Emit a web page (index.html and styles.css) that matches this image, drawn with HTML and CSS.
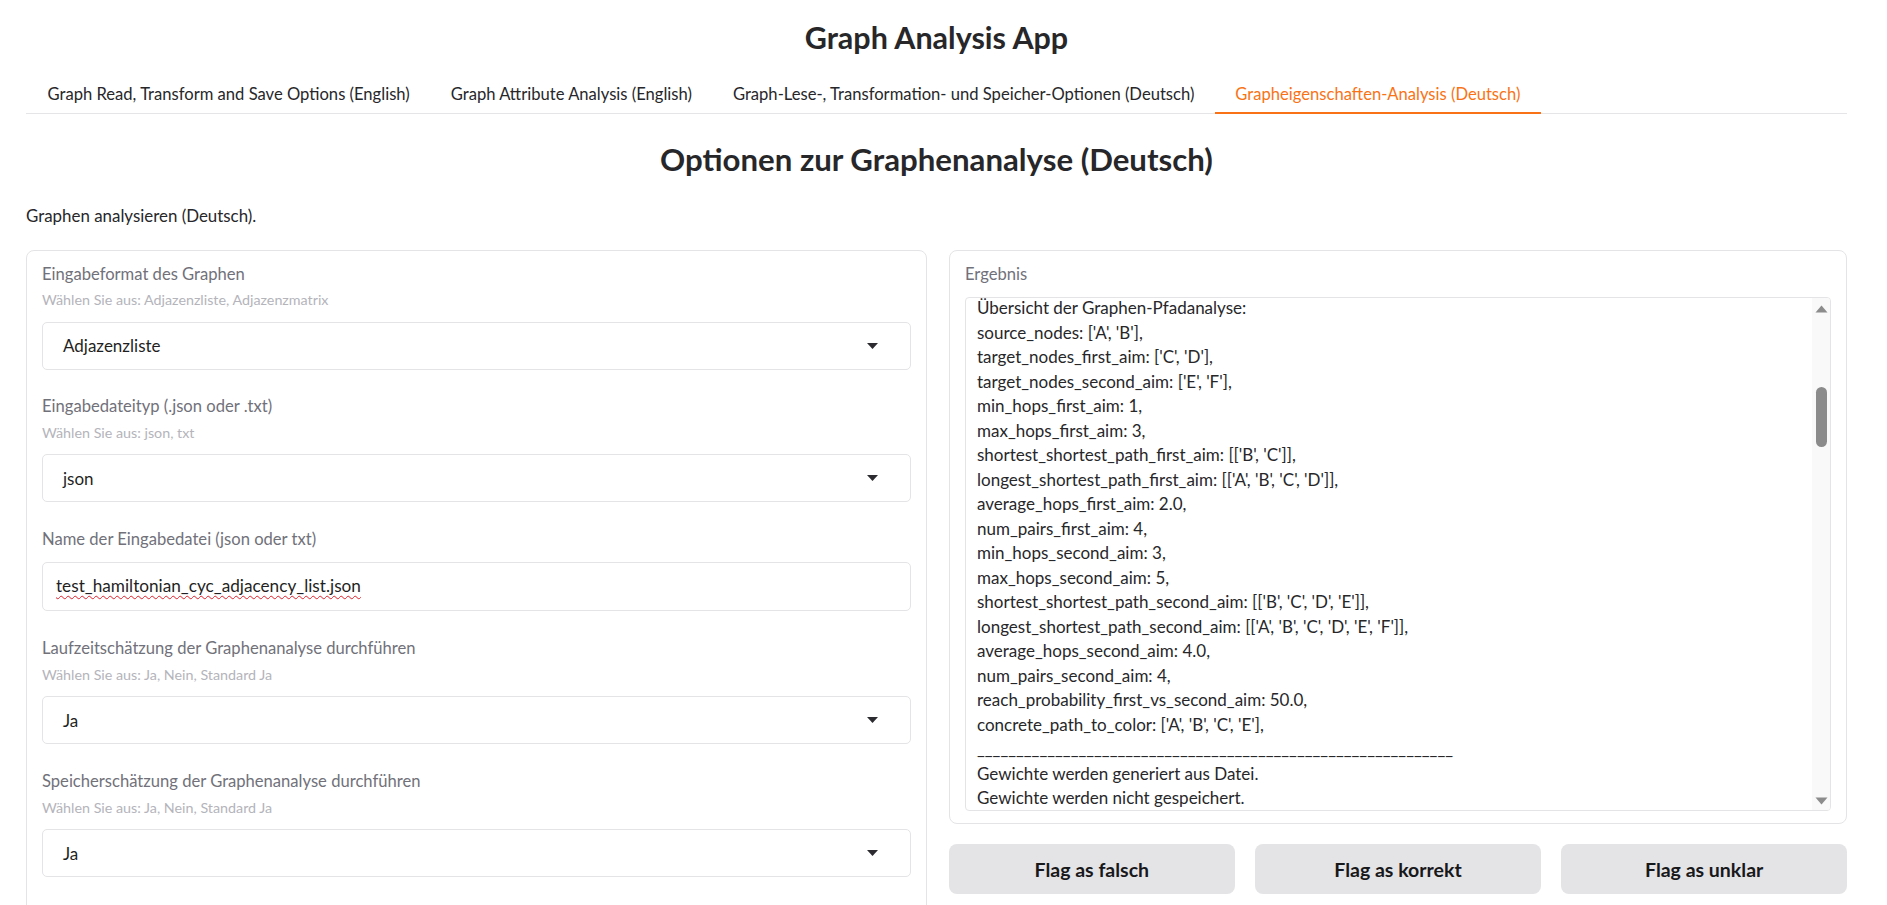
FILE: index.html
```html
<!DOCTYPE html>
<html lang="de">
<head>
<meta charset="utf-8">
<title>Graph Analysis App</title>
<link rel="stylesheet" href="styles.css">
</head>
<body>
<div class="app">
  <h1 class="app-title">Graph Analysis App</h1>
  <nav class="tabs">
    <button class="tab">Graph Read, Transform and Save Options (English)</button>
    <button class="tab">Graph Attribute Analysis (English)</button>
    <button class="tab">Graph-Lese-, Transformation- und Speicher-Optionen (Deutsch)</button>
    <button class="tab tab-active">Grapheigenschaften-Analysis (Deutsch)</button>
  </nav>
  <h2 class="page-title">Optionen zur Graphenanalyse (Deutsch)</h2>
  <p class="description">Graphen analysieren (Deutsch).</p>

  <div class="columns">
    <section class="panel panel-form">
      <div class="field">
        <div class="label">Eingabeformat des Graphen</div>
        <div class="info">Wählen Sie aus: Adjazenzliste, Adjazenzmatrix</div>
        <div class="dropdown">
          <span class="dropdown-value">Adjazenzliste</span>
          <svg class="caret" width="11" height="6" viewBox="0 0 11 6"><polygon points="0,0 11,0 5.5,6" /></svg>
        </div>
      </div>
      <div class="field">
        <div class="label">Eingabedateityp (.json oder .txt)</div>
        <div class="info">Wählen Sie aus: json, txt</div>
        <div class="dropdown">
          <span class="dropdown-value">json</span>
          <svg class="caret" width="11" height="6" viewBox="0 0 11 6"><polygon points="0,0 11,0 5.5,6" /></svg>
        </div>
      </div>
      <div class="field">
        <div class="label">Name der Eingabedatei (json oder txt)</div>
        <div class="textbox"><span class="misspelled">test_hamiltonian_cyc_adjacency_list.json</span></div>
      </div>
      <div class="field">
        <div class="label">Laufzeitschätzung der Graphenanalyse durchführen</div>
        <div class="info">Wählen Sie aus: Ja, Nein, Standard Ja</div>
        <div class="dropdown">
          <span class="dropdown-value">Ja</span>
          <svg class="caret" width="11" height="6" viewBox="0 0 11 6"><polygon points="0,0 11,0 5.5,6" /></svg>
        </div>
      </div>
      <div class="field">
        <div class="label">Speicherschätzung der Graphenanalyse durchführen</div>
        <div class="info">Wählen Sie aus: Ja, Nein, Standard Ja</div>
        <div class="dropdown">
          <span class="dropdown-value">Ja</span>
          <svg class="caret" width="11" height="6" viewBox="0 0 11 6"><polygon points="0,0 11,0 5.5,6" /></svg>
        </div>
      </div>
    </section>

    <div class="right-col">
      <section class="panel panel-result">
        <div class="label">Ergebnis</div>
        <div class="result-box">
          <div class="result-text"><pre class="result-pre">Übersicht der Graphen-Pfadanalyse:
source_nodes: ['A', 'B'],
target_nodes_first_aim: ['C', 'D'],
target_nodes_second_aim: ['E', 'F'],
min_hops_first_aim: 1,
max_hops_first_aim: 3,
shortest_shortest_path_first_aim: [['B', 'C']],
longest_shortest_path_first_aim: [['A', 'B', 'C', 'D']],
average_hops_first_aim: 2.0,
num_pairs_first_aim: 4,
min_hops_second_aim: 3,
max_hops_second_aim: 5,
shortest_shortest_path_second_aim: [['B', 'C', 'D', 'E']],
longest_shortest_path_second_aim: [['A', 'B', 'C', 'D', 'E', 'F']],
average_hops_second_aim: 4.0,
num_pairs_second_aim: 4,
reach_probability_first_vs_second_aim: 50.0,
concrete_path_to_color: ['A', 'B', 'C', 'E'],
_____________________________________________________________
Gewichte werden generiert aus Datei.
Gewichte werden nicht gespeichert.</pre></div>
          <div class="vscroll">
            <svg class="sb-arrow" width="13" height="8" viewBox="0 0 13 8"><polygon points="6.5,0.5 12.5,7.5 0.5,7.5" /></svg>
            <div class="sb-thumb"></div>
            <svg class="sb-arrow sb-arrow-down" width="13" height="8" viewBox="0 0 13 8"><polygon points="0.5,0.5 12.5,0.5 6.5,7.5" /></svg>
          </div>
        </div>
      </section>
      <div class="actions">
        <button class="flag-btn">Flag as falsch</button>
        <button class="flag-btn">Flag as korrekt</button>
        <button class="flag-btn">Flag as unklar</button>
      </div>
    </div>
  </div>
</div>
</body>
</html>
```

FILE: styles.css
```css
html, body {
  margin: 0;
  padding: 0;
  overflow: hidden;
  background: #ffffff;
}

body {
  font-family: "Lato", "Open Sans", sans-serif;
  color: #27272a;
}

.app {
  padding: 0 40px 0 26px;
}

.app-title {
  margin: 20px 0 0;
  font-size: 30.5px;
  line-height: 35px;
  font-weight: 700;
  text-align: center;
  color: #27272a;
}

.tabs {
  display: flex;
  margin-top: 20px;
  border-bottom: 1px solid #e5e5e8;
}

.tab {
  font-family: inherit;
  font-size: 16.6px;
  line-height: 22px;
  color: #27272a;
  background: none;
  border: none;
  border-bottom: 2px solid transparent;
  margin: 0 0 -1px;
  padding: 8px 20.5px 7.3px;
  cursor: pointer;
  white-space: nowrap;
}

.tab:first-child {
  margin-left: 1px;
}

.tab-active {
  color: #f97316;
  border-bottom-color: #f97316;
}

.page-title {
  margin: 26.9px 0 0;
  font-size: 31.2px;
  line-height: 37px;
  font-weight: 700;
  text-align: center;
  color: #27272a;
}

.description {
  margin: 26.8px 0 0;
  font-size: 16.9px;
  line-height: 22px;
}

.columns {
  display: grid;
  grid-template-columns: 901px 1fr;
  gap: 22px;
  margin-top: 22.8px;
  align-items: start;
}

.panel {
  border: 1px solid #e4e4e7;
  border-radius: 8px;
  background: #ffffff;
}

.panel-form {
  padding: 11.8px 15px 60px 15px;
}

.field + .field {
  margin-top: 25.9px;
}

.label {
  font-size: 16.6px;
  line-height: 22px;
  color: #71717a;
}

.info {
  margin-top: 5.8px;
  font-size: 14.3px;
  line-height: 20px;
  color: #b4b4bb;
}

.dropdown {
  display: flex;
  align-items: center;
  height: 48px;
  box-sizing: border-box;
  margin-top: 11.2px;
  padding: 0 32px 0 20px;
  border: 1px solid #e4e4e7;
  border-radius: 5px;
  font-size: 17px;
  color: #1f1f23;
}

.dropdown-value {
  flex: 1;
}

.caret {
  display: block;
  fill: #2b2b30;
}

.textbox {
  display: flex;
  align-items: center;
  height: 49px;
  box-sizing: border-box;
  margin-top: 12px;
  padding: 0 13px 3px;
  border: 1px solid #e4e4e7;
  border-radius: 5px;
  font-size: 17.2px;
  color: #1f1f23;
}

.misspelled {
  text-decoration: underline wavy #e0202a;
  text-decoration-thickness: 1px;
  text-underline-offset: 3px;
  text-decoration-skip-ink: none;
}

.right-col {
  display: flex;
  flex-direction: column;
}

.panel-result {
  padding: 11.8px 15px 11.4px 15px;
}

.result-box {
  display: flex;
  height: 514.3px;
  box-sizing: border-box;
  margin-top: 12.5px;
  border: 1px solid #e4e4e7;
  border-radius: 4px;
  overflow: hidden;
}

.result-text {
  flex: 1;
  overflow: hidden;
  padding-left: 11px;
}

.result-pre {
  margin: -2px 0 0;
  font-family: "Lato", "Open Sans", sans-serif;
  font-size: 17px;
  line-height: 24.5px;
  color: #27272a;
  white-space: pre;
}

.vscroll {
  width: 18px;
  display: flex;
  flex-direction: column;
  align-items: center;
  padding: 6.7px 0 5.7px;
  background: #f9f9f9;
}

.sb-arrow {
  display: block;
  fill: #8c8c8c;
}

.sb-arrow-down {
  margin-top: auto;
}

.sb-thumb {
  width: 11px;
  height: 60px;
  margin-top: 74px;
  border-radius: 6px;
  background: #8b8b8b;
}

.actions {
  display: grid;
  grid-template-columns: repeat(3, 1fr);
  gap: 20.5px;
  margin-top: 20.3px;
}

.flag-btn {
  height: 49.7px;
  padding: 2px 0 0;
  border: none;
  border-radius: 8px;
  background: #e4e4e7;
  font-family: inherit;
  font-size: 19.5px;
  font-weight: 700;
  color: #18181b;
  cursor: pointer;
}
```
